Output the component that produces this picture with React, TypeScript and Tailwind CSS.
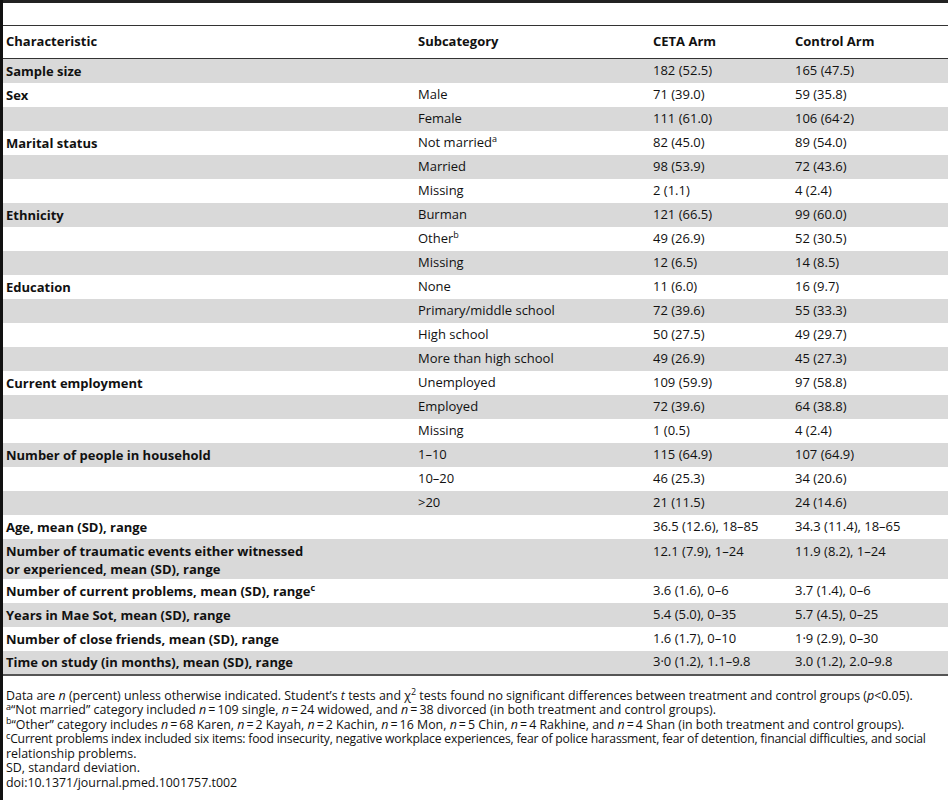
import type { ReactNode } from 'react';

type Row = {
  label?: ReactNode;
  sub?: ReactNode;
  ceta: string;
  control: string;
  tall?: boolean;
};

const Sup = ({ children }: { children: ReactNode }) => (
  <sup className="text-[9px] leading-none">{children}</sup>
);

const rows: Row[] = [
  { label: 'Sample size', ceta: '182 (52.5)', control: '165 (47.5)' },
  { label: 'Sex', sub: 'Male', ceta: '71 (39.0)', control: '59 (35.8)' },
  { sub: 'Female', ceta: '111 (61.0)', control: '106 (64·2)' },
  {
    label: 'Marital status',
    sub: (
      <>
        Not married<Sup>a</Sup>
      </>
    ),
    ceta: '82 (45.0)',
    control: '89 (54.0)',
  },
  { sub: 'Married', ceta: '98 (53.9)', control: '72 (43.6)' },
  { sub: 'Missing', ceta: '2 (1.1)', control: '4 (2.4)' },
  { label: 'Ethnicity', sub: 'Burman', ceta: '121 (66.5)', control: '99 (60.0)' },
  {
    sub: (
      <>
        Other<Sup>b</Sup>
      </>
    ),
    ceta: '49 (26.9)',
    control: '52 (30.5)',
  },
  { sub: 'Missing', ceta: '12 (6.5)', control: '14 (8.5)' },
  { label: 'Education', sub: 'None', ceta: '11 (6.0)', control: '16 (9.7)' },
  { sub: 'Primary/middle school', ceta: '72 (39.6)', control: '55 (33.3)' },
  { sub: 'High school', ceta: '50 (27.5)', control: '49 (29.7)' },
  { sub: 'More than high school', ceta: '49 (26.9)', control: '45 (27.3)' },
  { label: 'Current employment', sub: 'Unemployed', ceta: '109 (59.9)', control: '97 (58.8)' },
  { sub: 'Employed', ceta: '72 (39.6)', control: '64 (38.8)' },
  { sub: 'Missing', ceta: '1 (0.5)', control: '4 (2.4)' },
  { label: 'Number of people in household', sub: '1–10', ceta: '115 (64.9)', control: '107 (64.9)' },
  { sub: '10–20', ceta: '46 (25.3)', control: '34 (20.6)' },
  { sub: '>20', ceta: '21 (11.5)', control: '24 (14.6)' },
  { label: 'Age, mean (SD), range', ceta: '36.5 (12.6), 18–85', control: '34.3 (11.4), 18–65' },
  {
    label: (
      <>
        Number of traumatic events either witnessed
        <br />
        or experienced, mean (SD), range
      </>
    ),
    ceta: '12.1 (7.9), 1–24',
    control: '11.9 (8.2), 1–24',
    tall: true,
  },
  {
    label: (
      <>
        Number of current problems, mean (SD), range<Sup>c</Sup>
      </>
    ),
    ceta: '3.6 (1.6), 0–6',
    control: '3.7 (1.4), 0–6',
  },
  { label: 'Years in Mae Sot, mean (SD), range', ceta: '5.4 (5.0), 0–35', control: '5.7 (4.5), 0–25' },
  { label: 'Number of close friends, mean (SD), range', ceta: '1.6 (1.7), 0–10', control: '1·9 (2.9), 0–30' },
  { label: 'Time on study (in months), mean (SD), range', ceta: '3·0 (1.2), 1.1–9.8', control: '3.0 (1.2), 2.0–9.8' },
];

const n = <i>n</i>;

export default function App() {
  return (
    <div
      className="w-[948px] h-[800px] bg-white text-[#111] border-l-[3px] border-[#111] text-[13px] overflow-hidden"
      style={{ fontFamily: '"Open Sans", sans-serif' }}
    >
      <div className="h-[3px] bg-[#222]" />
      <div className="h-[22px]" />

      <table className="w-full table-fixed border-collapse">
        <colgroup>
          <col className="w-[412px]" />
          <col className="w-[235px]" />
          <col className="w-[142px]" />
          <col />
        </colgroup>
        <thead>
          <tr className="h-[33px] border-t border-b border-[#333]">
            <th className="text-left font-bold pl-[3px]">Characteristic</th>
            <th className="text-left font-bold pl-[3px]">Subcategory</th>
            <th className="text-left font-bold pl-[3px]">CETA Arm</th>
            <th className="text-left font-bold pl-[3px]">Control Arm</th>
          </tr>
        </thead>
        <tbody>
          {rows.map((row, i) => (
            <tr
              key={i}
              className={`${i % 2 === 0 ? 'bg-[#d9d9d9]' : 'bg-white'} ${row.tall ? 'h-[40px]' : 'h-[24px]'} ${
                i === rows.length - 1 ? 'border-b-2 border-[#555]' : ''
              }`}
            >
              <td className={`pl-[3px] font-bold leading-[18px] ${row.tall ? 'align-top pt-[3px]' : ''}`}>
                {row.label}
              </td>
              <td className={`pl-[3px] ${row.tall ? 'align-top pt-[3px]' : ''}`}>{row.sub}</td>
              <td className={`pl-[3px] ${row.tall ? 'align-top pt-[3px]' : ''}`}>{row.ceta}</td>
              <td className={`pl-[3px] ${row.tall ? 'align-top pt-[3px]' : ''}`}>{row.control}</td>
            </tr>
          ))}
        </tbody>
      </table>

      {/* Footnotes */}
      <div className="mt-[13px] pl-[3px] pr-[2px] text-[12.4px] leading-[14.5px]">
        <p>
          Data are {n} (percent) unless otherwise indicated. Student’s <i>t</i> tests and χ<Sup>2</Sup> tests found
          no significant differences between treatment and control groups (<i>p</i>&lt;0.05).
        </p>
        <p>
          <Sup>a</Sup>“Not married” category included {n}&thinsp;=&thinsp;109 single, {n}&thinsp;=&thinsp;24
          widowed, and {n}&thinsp;=&thinsp;38 divorced (in both treatment and control groups).
        </p>
        <p>
          <Sup>b</Sup>“Other” category includes {n}&thinsp;=&thinsp;68 Karen, {n}&thinsp;=&thinsp;2 Kayah,{' '}
          {n}&thinsp;=&thinsp;2 Kachin, {n}&thinsp;=&thinsp;16 Mon, {n}&thinsp;=&thinsp;5 Chin,{' '}
          {n}&thinsp;=&thinsp;4 Rakhine, and {n}&thinsp;=&thinsp;4 Shan (in both treatment and control groups).
        </p>
        <p>
          <span className="whitespace-nowrap tracking-[-0.2px] text-[12.2px]">
            <Sup>c</Sup>Current problems index included six items: food insecurity, negative workplace experiences,
            fear of police harassment, fear of detention, financial difficulties, and social
          </span>
          <br />
          relationship problems.
        </p>
        <p>SD, standard deviation.</p>
        <p>doi:10.1371/journal.pmed.1001757.t002</p>
      </div>
    </div>
  );
}
